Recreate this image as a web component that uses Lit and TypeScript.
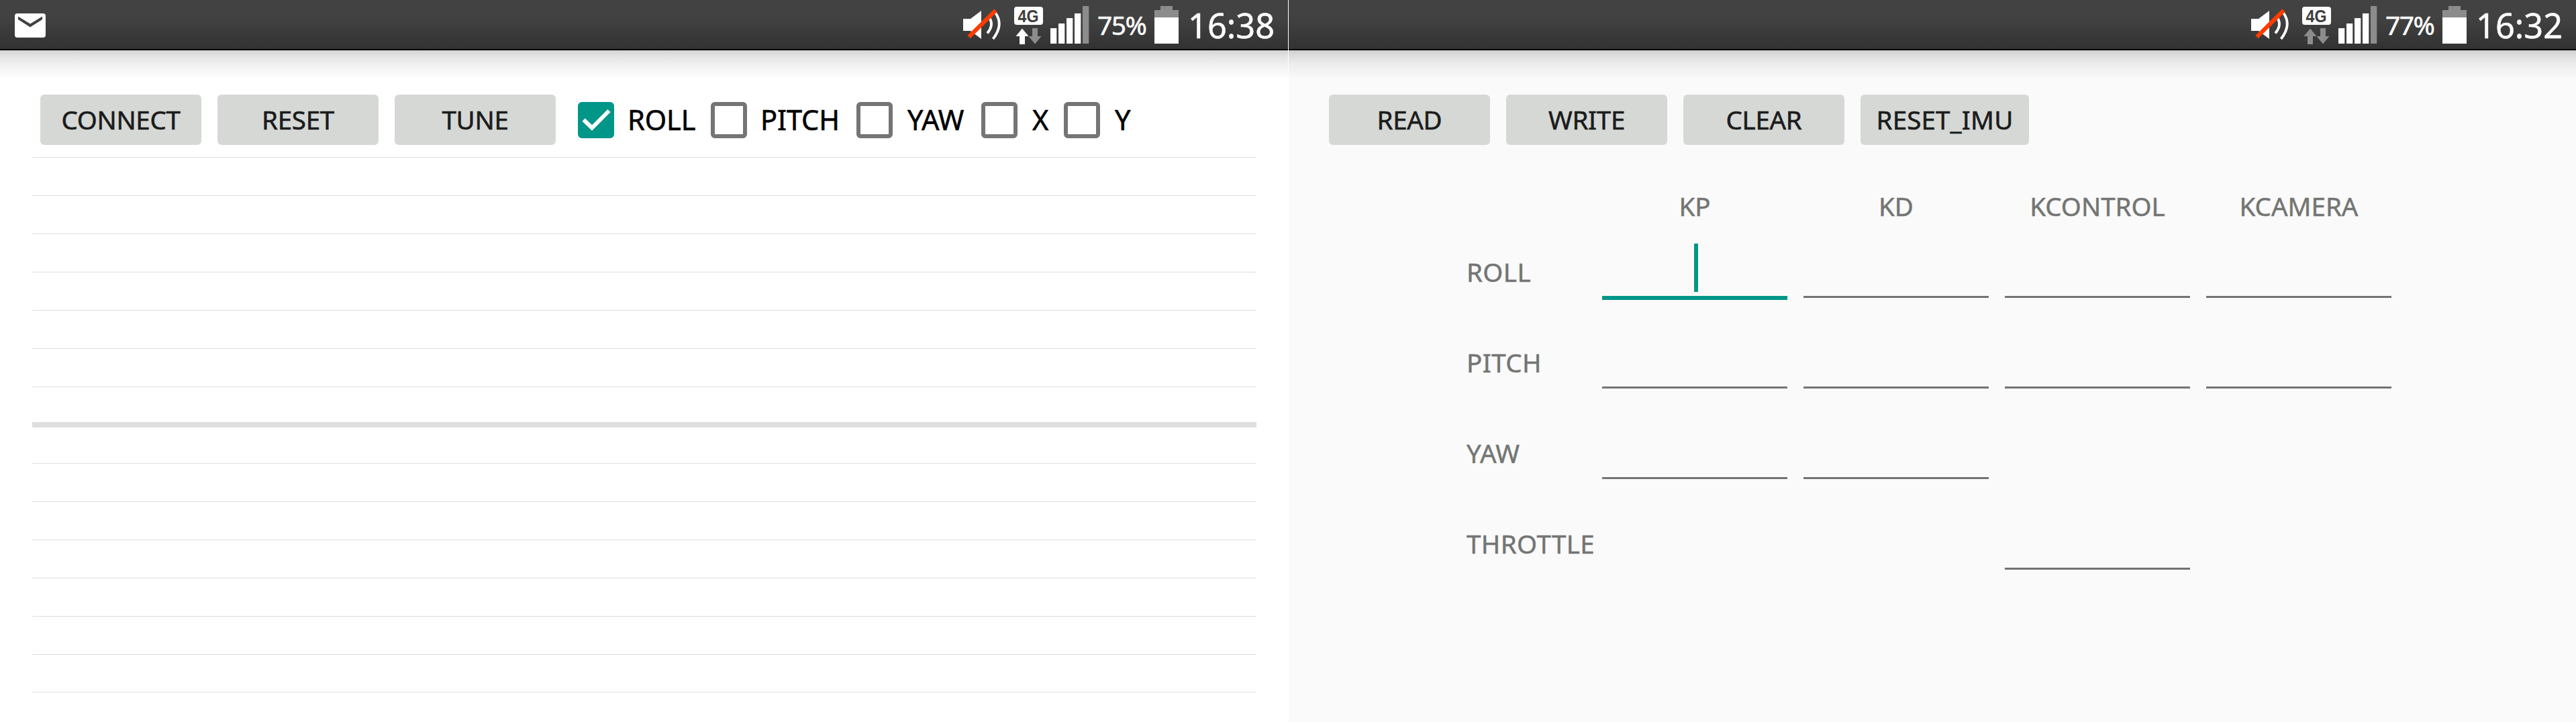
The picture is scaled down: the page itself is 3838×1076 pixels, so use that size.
import { LitElement, html, svg, css } from "lit";
import { customElement, property } from "lit/decorators.js";
import { classMap } from "lit/directives/class-map.js";

@customElement("status-bar")
class StatusBar extends LitElement {
  @property() time = "";
  @property() battery = "";
  @property({ type: Boolean }) mail = false;
  @property({ type: Boolean }) uploading = false;

  static styles = css`
    :host {
      display: flex;
      justify-content: space-between;
      box-sizing: border-box;
      height: 75px;
      border-bottom: 2px solid #000;
      background: linear-gradient(#424242 0%, #424242 35%, #323232 100%);
      color: #fff;
      font-family: "Noto Sans", sans-serif;
      -webkit-text-stroke: 0.5px currentColor;
    }
    .left { padding: 20px 0 0 22px; }
    .right { display: flex; align-items: flex-start; }
    svg { display: block; flex: none; -webkit-text-stroke: 0; }
    .pct {
      width: 87px; padding-left: 2px; box-sizing: border-box;
      font-size: 39px; line-height: 74px; letter-spacing: -1.500px; white-space: nowrap;
    }
    .clock {
      width: 149px; box-sizing: border-box;
      font-size: 50.5px; line-height: 76px; white-space: nowrap;
    }
    .badge { font: 700 25px "Liberation Sans", sans-serif; fill: #3d3d3d; }
  `;

  render() {
    const up = this.uploading ? "#fff" : "#8c8c8c";
    return html`
      <div class="left">
        ${this.mail
          ? html`<svg width="46" height="36" viewBox="0 0 46 36">
              <rect width="46" height="36" rx="4" fill="#fff" />
              <path d="M5 4.500V9l18 11.500L41 9V4.500L23 15.500z" fill="#404040" />
            </svg>`
          : ""}
      </div>
      <div class="right">
        <svg width="200" height="73" viewBox="1433 0 200 73">
          <path d="M1435 28h11l16-12v42l-16-12h-11z" fill="#fff" />
          <path d="M1474.500 27Q1481 38 1471 49.500M1483 19Q1496 37 1479.500 58" fill="none" stroke="#fff" stroke-width="3.800" />
          <path d="M1443.500 55L1483.500 15.500" stroke="#ff3b00" stroke-width="6" />
          <rect x="1511" y="10" width="43" height="27" rx="4" fill="#fff" />
          <text class="badge" x="1516.500" y="33" textLength="31" lengthAdjust="spacingAndGlyphs">4G</text>
          <path d="M1523 42.500l9.500 11.500h-5.500v12h-8v-12h-5.500z" fill=${up} />
          <path d="M1538 42h8v12h5.500l-9.500 11.500L1532.500 54h5.500z" fill="#8c8c8c" />
          ${[[1565, 42], [1577, 35], [1589, 27], [1601, 20], [1613, 9]].map(
            ([x, y], i) => svg`<rect x=${x} y=${y} width="9.300" height=${65 - y} fill=${i === 4 ? "#8c8c8c" : "#fff"} />`
          )}
        </svg>
        <span class="pct">${this.battery}</span>
        <svg width="50" height="73" viewBox="0 0 50 73">
          <path d="M9 9h18v6h9v11H0V15h9z" fill="#8c8c8c" />
          <path d="M0 26h36v39H0z" fill="#fff" />
        </svg>
        <span class="clock">${this.time}</span>
      </div>
    `;
  }
}

@customElement("app-root")
class AppRoot extends LitElement {
  static styles = css`
    :host {
      display: grid;
      grid-template-columns: 1919px 1918px;
      column-gap: 1px;
      height: 1076px;
      overflow: hidden;
      background: #fff;
      font-family: "Noto Sans", sans-serif;
    }
    .screen { display: flex; flex-direction: column; height: 1076px; min-width: 0; }
    .plot { background: linear-gradient(#d2d2d2, #e2e2e2 8px, #efefef 20px, #fff 43px) 0 75px / 100% 44px no-repeat #fff; }
    .gains { background: linear-gradient(#cfcfcf, #dedede 8px, #ececec 20px, #fafafa 43px) 0 75px / 100% 44px no-repeat #fafafa; }
    .toolbar { display: flex; gap: 24px; padding: 66px 0 0 60px; height: 75px; }
    .btn {
      min-width: 240px; height: 75px; padding: 0 24px; box-sizing: border-box;
      border: 0; border-radius: 6px; background: #d6d8d6; color: #1b1c1b;
      font: 38.500px/75px "Noto Sans", sans-serif; letter-spacing: -0.300px;
      -webkit-text-stroke: 0.600px currentColor;
      text-align: center; white-space: nowrap;
    }
    .btn.wide { min-width: 251px; padding: 0; letter-spacing: 0.150px; }
    .checks { display: flex; align-items: center; margin-left: 9px; }
    .check { display: flex; align-items: center; gap: 20px; font-size: 41.500px; line-height: 75px; letter-spacing: -0.100px; color: #000; -webkit-text-stroke: 0.600px currentColor; }
    .roll { width: 198px; }
    .pitch { width: 217px; }
    .yaw { width: 186px; }
    .x { width: 123px; }
    .yaw, .x, .y { gap: 22px; }
    .box { flex: none; width: 54px; height: 54px; box-sizing: border-box; border: 6px solid #757575; border-radius: 6px; }
    .box.on { border: 0; background: #009688; }
    .box svg { display: block; }
    .chart { display: flex; flex-direction: column; margin: 18px 47px 0 48px; }
    .line { height: 1px; margin-bottom: 56px; background: #dedede; }
    .line.mid { height: 8px; margin: -4px 0 53px; }
    .line.last { margin-top: -1px; }
    .form {
      display: grid; grid-template-columns: 191px repeat(4, 300px); grid-template-rows: 93px repeat(4, 135px);
      padding: 0 0 0 264px; color: #737573; font-size: 38.500px; letter-spacing: 0;
      -webkit-text-stroke: 0.500px currentColor;
    }
    .head { padding-top: 64px; line-height: 54px; text-align: center; }
    .label { padding: 69px 0 0 1px; line-height: 54px; letter-spacing: 0.400px; white-space: nowrap; }
    .field { display: flex; justify-content: center; align-items: flex-start; box-sizing: border-box; height: 135px; margin: 0 12px; padding-top: 54px; border-bottom: 3px solid #737373; }
    .field.focus { height: 138px; border-bottom: 6px solid #009688; }
    .caret { width: 6px; height: 72px; margin-left: 4px; background: #009688; }
  `;

  private checks = ["ROLL", "PITCH", "YAW", "X", "Y"];
  private rows: [string, number[]][] = [
    ["ROLL", [1, 1, 1, 1]],
    ["PITCH", [1, 1, 1, 1]],
    ["YAW", [1, 1, 0, 0]],
    ["THROTTLE", [0, 0, 1, 0]],
  ];

  render() {
    return html`
      <section class="screen plot">
        <status-bar mail uploading time="16:38" battery="75%"></status-bar>
        <div class="toolbar">
          ${["CONNECT", "RESET", "TUNE"].map((t) => html`<button class="btn">${t}</button>`)}
          <div class="checks">
            ${this.checks.map(
              (t, i) => html`<label class="check ${t.toLowerCase()}">
                <span class=${classMap({ box: true, on: i === 0 })}>
                  ${i === 0
                    ? html`<svg width="54" height="54" viewBox="0 0 54 54"><path d="M8.500 26.500L21 38.500L46.500 13" fill="none" stroke="#fff" stroke-width="6" /></svg>`
                    : ""}
                </span>${t}</label>`
            )}
          </div>
        </div>
        <div class="chart">
          ${Array.from({ length: 15 }, (_, i) => html`<div class=${classMap({ line: true, mid: i === 7, last: i === 14 })}></div>`)}
        </div>
      </section>
      <section class="screen gains">
        <status-bar time="16:32" battery="77%"></status-bar>
        <div class="toolbar">
          ${["READ", "WRITE", "CLEAR"].map((t) => html`<button class="btn">${t}</button>`)}
          <button class="btn wide">RESET_IMU</button>
        </div>
        <div class="form">
          <span></span>
          ${["KP", "KD", "KCONTROL", "KCAMERA"].map((t) => html`<span class="head">${t}</span>`)}
          ${this.rows.map(
            ([name, cells], r) => html`<span class="label">${name}</span>
              ${cells.map((on, c) =>
                on
                  ? html`<div class=${classMap({ field: true, focus: r === 0 && c === 0 })}>
                      ${r === 0 && c === 0 ? html`<i class="caret"></i>` : ""}
                    </div>`
                  : html`<span></span>`
              )}`
          )}
        </div>
      </section>
    `;
  }
}
